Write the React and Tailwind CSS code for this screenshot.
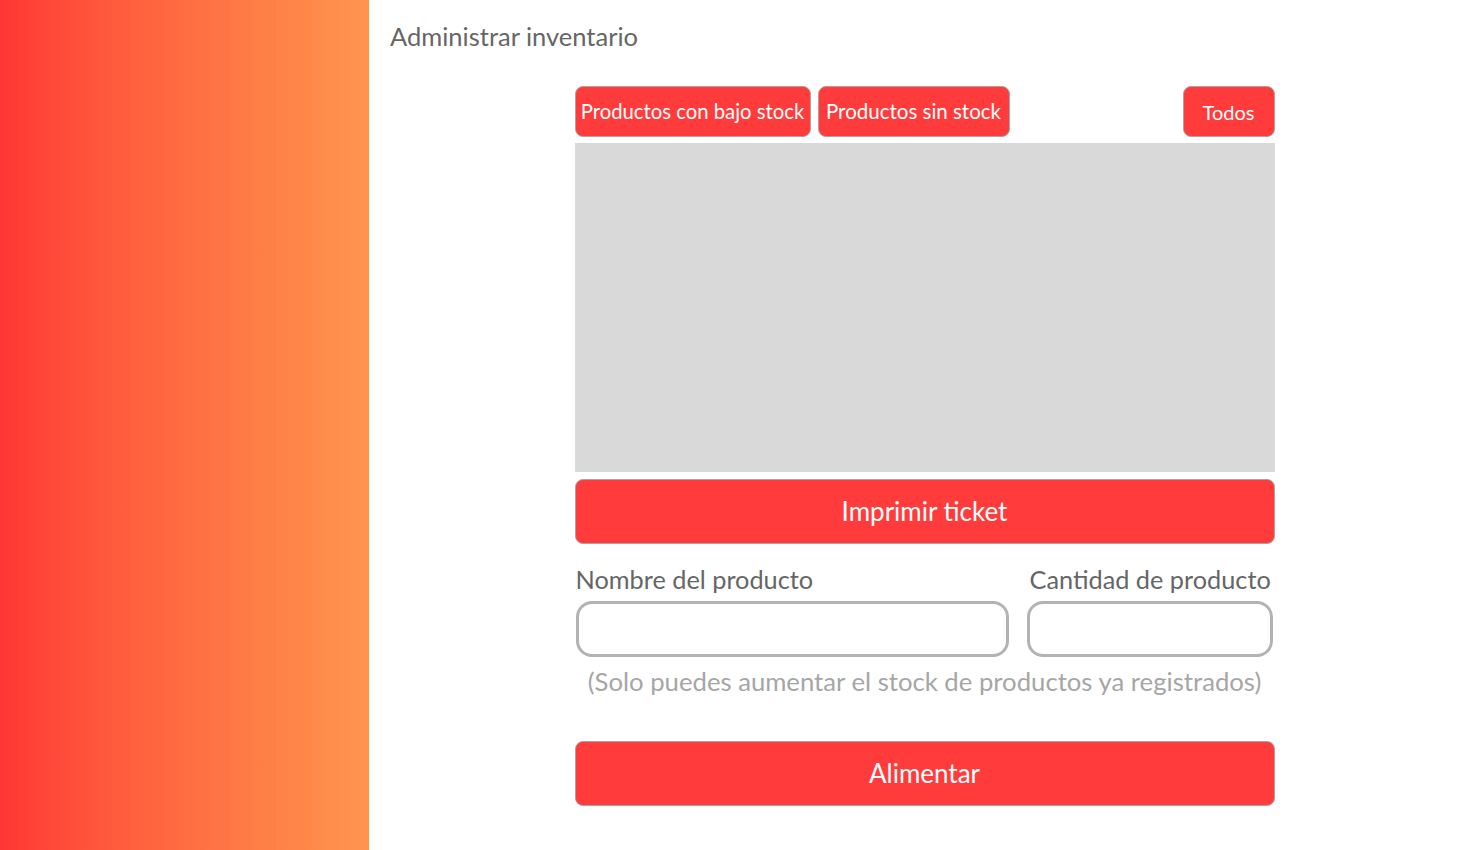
import React, { useState } from "react";

// Pantalla de administrar inventario
const App = () => {
  const [nombre, setNombre] = useState("");
  const [cantidad, setCantidad] = useState("");

  return (
    <div className="flex w-full h-[850px] bg-white font-['Lato','Liberation_Sans',sans-serif]">
      {/*Barra lateral con degradado */}
      <aside className="w-[369px] h-full shrink-0 bg-gradient-to-r from-[#ff3535] to-[#ff954e]" />
      {/*Contenido principal */}
      <main className="flex-1 flex flex-col">
        <h1 className="pl-[21px] pt-[20px] text-[25.5px] leading-[32px] text-[#666666]">
          Administrar inventario
        </h1>
        <div className="mx-auto w-[700px] mt-[34px] flex flex-col">
          {/*Filtros */}
          <div className="flex items-center h-[51px]">
            <button className="h-[51px] w-[236px] rounded-[8px] border border-[#b0a0a0] bg-[#ff3b3b] text-white text-[20.3px]">
              Productos con bajo stock
            </button>
            <button className="ml-[7px] h-[51px] w-[192px] rounded-[8px] border border-[#b0a0a0] bg-[#ff3b3b] text-white text-[20.5px]">
              Productos sin stock
            </button>
            <button className="ml-auto h-[51px] w-[92px] rounded-[8px] border border-[#b0a0a0] bg-[#ff3b3b] text-white text-[20px]">
              Todos
            </button>
          </div>
          {/*Tabla de productos */}
          <div className="mt-[6px] h-[329px] bg-[#d9d9d9]" />
          <button className="mt-[7px] h-[65px] rounded-[8px] border border-[#b0a0a0] bg-[#ff3b3b] text-white text-[26px]">
            Imprimir ticket
          </button>
          {/*Formulario para alimentar stock */}
          <div className="mt-[19px] flex">
            <div className="flex flex-col w-[434px]">
              <label className="ml-[1px] text-[25.3px] leading-[32px] text-[#666666]">Nombre del producto</label>
              <input
                value={nombre}
                onChange={(e) => setNombre(e.target.value)}
                className="mt-[6px] ml-[1px] h-[56px] rounded-[16px] border-[3px] border-[#b3b3b3] outline-none px-3 text-[20px]"
              />
            </div>
            <div className="ml-[18px] flex flex-col w-[246px]">
              <label className="ml-[3px] text-[25.3px] leading-[32px] text-[#666666] whitespace-nowrap">Cantidad de producto</label>
              <input
                value={cantidad}
                onChange={(e) => setCantidad(e.target.value)}
                className="mt-[6px] h-[56px] rounded-[16px] border-[3px] border-[#b3b3b3] outline-none px-3 text-[20px]"
              />
            </div>
          </div>
          <p className="mt-[8px] text-center text-[25.7px] leading-[32px] text-[#a6a6a6] whitespace-nowrap">
            (Solo puedes aumentar el stock de productos ya registrados)
          </p>
          <button className="mt-[44px] h-[65px] rounded-[8px] border border-[#b0a0a0] bg-[#ff3b3b] text-white text-[26px]">
            Alimentar
          </button>
        </div>
      </main>
    </div>
  );
};

export default App;
